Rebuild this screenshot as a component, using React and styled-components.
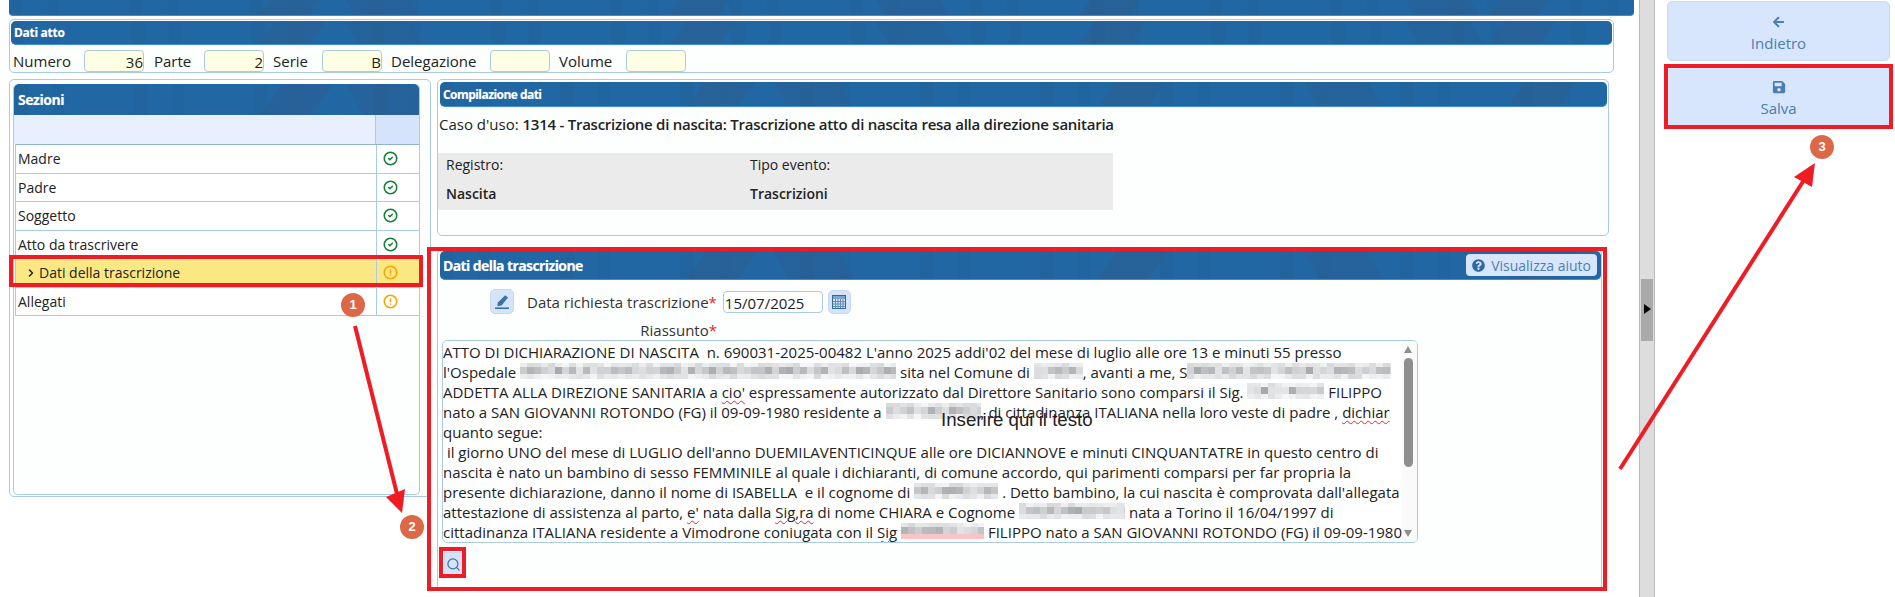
import React from 'react';
import styled, { createGlobalStyle } from 'styled-components';
import { CircleCheck, CircleAlert, ChevronRight, Search } from 'lucide-react';
import { FaArrowLeft, FaSave, FaQuestionCircle } from 'react-icons/fa';

const GlobalStyle = createGlobalStyle`
  html, body {
    margin: 0;
    padding: 0;
    background: #fff;
    overflow: hidden;
  }
  body {
    font-family: 'Open Sans', sans-serif;
    font-size: 14px;
    color: #222;
  }
  * { box-sizing: border-box; }
`;

const BLUE_PATTERN = `
  linear-gradient(125deg, transparent 0 62%, rgba(52, 88, 130, 0.32) 62% 74%, transparent 74%) 0 0 / 410px 100%,
  linear-gradient(60deg, transparent 0 40%, rgba(52, 88, 130, 0.26) 40% 52%, transparent 52%) 130px 0 / 530px 100%,
  repeating-linear-gradient(90deg, rgba(44, 84, 125, 0.16) 0 14px, transparent 14px 38px, rgba(44, 84, 125, 0.1) 38px 50px, transparent 50px 120px),
  #2067a4
`;

const Page = styled.div`
  position: relative;
  display: flex;
  width: 1895px;
  height: 597px;
  overflow: hidden;
`;

const Main = styled.main`
  width: 1639px;
  flex: none;
  padding-left: 9px;
`;

const TopBar = styled.div`
  width: 1625px;
  height: 16px;
  margin-bottom: 3px;
  border-bottom: 1px solid #3d8ed0;
  border-radius: 0 0 4px 4px;
  background: ${BLUE_PATTERN};
`;

const Panel = styled.section`
  width: ${(p) => p.$w}px;
  height: ${(p) => p.$h}px;
  flex: none;
  padding: ${(p) => p.$pad || '2px'};
  background: #fdfefe;
  border: 1px solid #a9cbe3;
  border-radius: 5px;
`;

const Header = styled.header`
  display: flex;
  align-items: center;
  justify-content: space-between;
  height: ${(p) => p.$h}px;
  padding: 0 3px 0 3px;
  border-bottom: 1px solid #3d8ed0;
  border-radius: 5px;
  color: #fff;
  font-weight: 700;
  font-size: ${(p) => p.$size || 12}px;
  letter-spacing: ${(p) => p.$track || -0.3}px;
  text-shadow: 0 0 1px rgba(255, 255, 255, 0.35);
  background: ${BLUE_PATTERN};
`;

const AttoRow = styled.div`
  display: flex;
  align-items: center;
  height: 23px;
  margin-top: 4px;
  padding-left: 2px;
  font-size: 15px;
`;

const AttoLabel = styled.label`
  width: ${(p) => p.$w}px;
`;

const AttoInput = styled.div`
  width: 60px;
  height: 22px;
  margin-right: ${(p) => p.$gap}px;
  padding-right: 0;
  text-align: right;
  line-height: 22px;
  background: #ffffe3;
  border: 1px solid #a9cbe3;
  border-radius: 4px;
`;

const Columns = styled.div`
  display: flex;
  gap: 6px;
  margin-top: 6px;
`;

const SectionsInner = styled.div`
  height: 411px;
  background: #fdfefe;
  border: 1px solid #a9cbe3;
  border-top: 0;
  border-radius: 5px;
`;

const SectionsHead = styled(Header)`
  padding-left: 4px;
  border-radius: 5px 5px 0 0;
  border-bottom: 0;
  margin-top: 1px;
`;

const SubHead = styled.div`
  display: flex;
  height: 29px;
  background: #e8efff;
  & > div {
    margin-left: auto;
    width: 44px;
    background: #d5e4fb;
    border-left: 1px solid #a9cbe3;
  }
`;

const SectionList = styled.ul`
  margin: 0 0 0 1px;
  padding: 0;
  list-style: none;
  border-top: 1px solid #8fb4d2;
  border-left: 1px solid #a9cbe3;
`;

const SectionRow = styled.li`
  display: flex;
  align-items: center;
  height: 28.5px;
  background: ${(p) => (p.$active ? '#fbe883' : '#fff')};
  border-bottom: 1px solid #a9cbe3;
`;

const SectionName = styled.div`
  flex: 1;
  display: flex;
  align-items: center;
  gap: 2px;
  padding-left: ${(p) => (p.$active ? 9 : 2)}px;
`;

const SectionStatus = styled.div`
  display: flex;
  align-items: center;
  width: 43px;
  height: 100%;
  padding-left: 6px;
  border-left: 1px solid #a9cbe3;
  color: ${(p) => (p.$ok ? '#15803a' : '#f7a600')};
`;

const RightColumn = styled.div`
  display: flex;
  flex-direction: column;
  gap: 13px;
`;

const CompilazioneHead = styled(Header)`
  margin-left: 2px;
`;

const UseCase = styled.p`
  margin: 7px 0 0 1px;
  line-height: 20px;
  font-size: 15px;
  strong {
    font-weight: 600;
    letter-spacing: -0.25px;
  }
`;

const GreyBox = styled.div`
  display: grid;
  grid-template-columns: 304px 1fr;
  grid-auto-rows: 28.5px;
  align-items: start;
  width: 675px;
  margin-top: 19px;
  padding-left: 8px;
  line-height: 24px;
  background: #ebebeb;
  strong { font-weight: 600; }
`;

const TrascrizioneHead = styled(Header)`
  padding-right: 4px;
`;

const HelpButton = styled.button`
  display: flex;
  align-items: center;
  gap: 6px;
  height: 22px;
  padding: 0 6px;
  color: #4c7fb0;
  font: 400 14px 'Open Sans', sans-serif;
  letter-spacing: 0;
  background: #d8e6fd;
  border: 0;
  border-radius: 4px;
`;

const DateRow = styled.div`
  display: flex;
  align-items: center;
  height: 25px;
  margin-top: 9px;
  padding-left: 50px;
  font-size: 15px;
`;

const IconButton = styled.button`
  display: flex;
  align-items: center;
  justify-content: center;
  width: ${(p) => p.$w}px;
  height: ${(p) => p.$h}px;
  padding: 0;
  color: #3b72a8;
  background: #d5e4fb;
  border: 1px solid #c4d8f0;
  border-radius: ${(p) => (p.$flat ? 0 : 5)}px;
`;

const DateLabel = styled.label`
  margin-left: 13px;
  white-space: nowrap;
  color: #333;
`;

const Star = styled.span`
  color: #e0262a;
`;

const DateInput = styled.div`
  width: 100px;
  height: 22px;
  margin: 0 5px 0 6px;
  padding-left: 1px;
  line-height: 22px;
  background: #fff;
  border: 1px solid #a9cbe3;
  border-radius: 4px;
`;

const AreaLabel = styled.div`
  width: 277px;
  margin-top: 6px;
  height: 20px;
  line-height: 20px;
  text-align: right;
  font-size: 15px;
  color: #333;
`;

const TextArea = styled.div`
  position: relative;
  display: flex;
  justify-content: space-between;
  width: 976px;
  height: 203px;
  margin: 0 0 0 2px;
  background: #fff;
  border: 1px solid #a9cbe3;
  border-radius: 5px;
  overflow: hidden;
`;

const TextBody = styled.div`
  padding-top: 1px;
  font-size: 15px;
`;

const TextLine = styled.div`
  height: 20px;
  line-height: 20px;
  white-space: pre;
`;

const Misspelt = styled.span`
  text-decoration: underline wavy #e8262a 1px;
  text-underline-offset: 2px;
`;

const Mosaic = styled.svg`
  display: inline-block;
  vertical-align: top;
  margin-top: 1px;
`;

const ScrollBar = styled.div`
  display: flex;
  flex-direction: column;
  align-items: center;
  flex: none;
  width: 15px;
  padding: 5px 3px 5px 0;
  background: #fafafa;
`;

const ArrowUp = styled.div`
  width: 0;
  height: 0;
  border: 4.5px solid transparent;
  border-top: 0;
  border-bottom: 7px solid #8f8f8f;
`;

const ArrowDown = styled(ArrowUp)`
  margin-top: auto;
  border-bottom: 0;
  border-top: 7px solid #8f8f8f;
`;

const ScrollThumb = styled.div`
  width: 9px;
  height: 109px;
  margin-top: 5px;
  background: #8f8f8f;
  border-radius: 5px;
`;

const Placeholder = styled.span`
  position: absolute;
  left: 498px;
  top: 69px;
  font: 400 18.7px 'Liberation Sans', sans-serif;
  line-height: 20px;
  color: #222;
  pointer-events: none;
`;

const SearchRow = styled.div`
  margin: 9px 0 0 4px;
`;

const Splitter = styled.div`
  position: relative;
  width: 16px;
  flex: none;
  background: #dddddd;
  border-left: 1px solid #bbb;
  border-right: 1px solid #bbb;
  &::before {
    content: '';
    position: absolute;
    left: 1px;
    right: 1px;
    top: 279px;
    height: 62px;
    background: #aaaaaa;
  }
  &::after {
    content: '';
    position: absolute;
    left: 4px;
    top: 304px;
    border: 5px solid transparent;
    border-left: 7px solid #000;
    border-right: 0;
  }
`;

const Side = styled.aside`
  display: flex;
  flex-direction: column;
  gap: 5px;
  width: 223px;
  margin: 1px 0 0 12px;
`;

const SideButton = styled.button`
  display: flex;
  flex-direction: column;
  align-items: center;
  gap: 4px;
  height: 60px;
  padding-top: 13px;
  color: #4a7db0;
  font: 400 15px 'Open Sans', sans-serif;
  line-height: 20px;
  background: #d8e6fd;
  border: 1px solid #c9dbf0;
  border-radius: 5px;
  svg {
    height: 14px;
    flex: none;
  }
`;

const Annotations = styled.svg`
  position: absolute;
  inset: 0;
  pointer-events: none;
`;

const Badge = styled.div`
  position: absolute;
  left: ${(p) => p.$x - 12}px;
  top: ${(p) => p.$y - 12}px;
  width: 24px;
  height: 24px;
  color: #fff;
  font: 700 13px/24px 'Liberation Sans', sans-serif;
  text-align: center;
  background: #dc6848;
  border-radius: 50%;
`;

// finto testo oscurato: blocchi grigi da 7px, generati da un seed
const Blur = ({ w, seed = 1, pink }) => {
  const cols = Math.ceil(w / 7);
  const cells = [];
  let s = seed * 9301;
  for (let r = 0; r < 3; r++) {
    for (let c = 0; c < cols; c++) {
      s = (s * 9301 + 49297) % 233280;
      const v = s / 233280;
      const base = r === 1 ? 168 + v * 60 : 215 + v * 30;
      const g = Math.round(base);
      cells.push(
        <rect
          key={`${r}-${c}`}
          x={c * 7}
          y={r === 0 ? 0 : r === 1 ? 4 : 11}
          width="7"
          height={r === 1 ? 7 : r === 0 ? 4 : 5}
          fill={pink && r === 2 ? '#fbc4c8' : `rgb(${g},${g + 1},${g + 3})`}
        />
      );
    }
  }
  return (
    <Mosaic width={w} height="16" viewBox={`0 0 ${w} 16`}>
      {cells}
    </Mosaic>
  );
};

const sections = [
  { name: 'Madre', ok: true },
  { name: 'Padre', ok: true },
  { name: 'Soggetto', ok: true },
  { name: 'Atto da trascrivere', ok: true },
  { name: 'Dati della trascrizione', ok: false, active: true },
  { name: 'Allegati', ok: false },
];

const EditIcon = () => (
  <svg width="16" height="16" viewBox="0 0 16 16" fill="currentColor">
    <path d="M11.2 1.2 14 3.6 7.6 11.4 3.4 12.2 3.8 8.4Z" />
    <rect x="1" y="13.4" width="14" height="1.6" />
  </svg>
);

const CalendarIcon = () => (
  <svg width="14" height="14" viewBox="0 0 14 14">
    <rect x="0.5" y="0.5" width="13" height="13" fill="#dbe7f5" stroke="#2f6aa3" />
    <rect x="1" y="1" width="12" height="3" fill="#7ea6cc" />
    <path
      d="M1 6.5h12M1 9h12M1 11.5h12M3.5 4v9M6 4v9M8.5 4v9M11 4v9"
      stroke="#5c8dbd"
      strokeWidth="1"
    />
  </svg>
);

const App = () => (
  <Page>
    <GlobalStyle />
    <Main>
      <TopBar />
      <Panel $w={1605} $h={54} $pad="1px">
        <Header $h={24}>Dati atto</Header>
        <AttoRow>
          <AttoLabel $w={71}>Numero</AttoLabel>
          <AttoInput $gap={10}>36</AttoInput>
          <AttoLabel $w={50}>Parte</AttoLabel>
          <AttoInput $gap={9}>2</AttoInput>
          <AttoLabel $w={49}>Serie</AttoLabel>
          <AttoInput $gap={9}>B</AttoInput>
          <AttoLabel $w={99}>Delegazione</AttoLabel>
          <AttoInput $gap={9} />
          <AttoLabel $w={67}>Volume</AttoLabel>
          <AttoInput $gap={0} />
        </AttoRow>
      </Panel>
      <Columns>
        <Panel $w={422} $h={418} $pad="3px 10px 3px 3px">
          <SectionsInner>
            <SectionsHead $h={31} $size={14} $track={-0.45}>Sezioni</SectionsHead>
            <SubHead><div /></SubHead>
            <SectionList>
              {sections.map((s) => (
                <SectionRow key={s.name} $active={s.active}>
                  <SectionName $active={s.active}>
                    {s.active && <ChevronRight size={12} strokeWidth={3} />}
                    {s.name}
                  </SectionName>
                  <SectionStatus $ok={s.ok}>
                    {s.ok ? <CircleCheck size={15} strokeWidth={2.5} /> : <CircleAlert size={15} strokeWidth={2.5} />}
                  </SectionStatus>
                </SectionRow>
              ))}
            </SectionList>
          </SectionsInner>
        </Panel>
        <RightColumn>
          <Panel $w={1172} $h={157} $pad="2px 1px 1px 0">
            <CompilazioneHead $h={25} $track={-0.55}>Compilazione dati</CompilazioneHead>
            <UseCase>
              Caso d'uso: <strong>1314 - Trascrizione di nascita: Trascrizione atto di nascita resa alla direzione sanitaria</strong>
            </UseCase>
            <GreyBox>
              <span>Registro:</span>
              <span>Tipo evento:</span>
              <strong>Nascita</strong>
              <strong>Trascrizioni</strong>
            </GreyBox>
          </Panel>
          <Panel $w={1165} $h={342} $pad="1px 0 0 2px">
            <TrascrizioneHead $h={29} $size={14} $track={-0.6}>
              Dati della trascrizione
              <HelpButton>
                <FaQuestionCircle size={13} color="#2f6aa3" />
                Visualizza aiuto
              </HelpButton>
            </TrascrizioneHead>
            <DateRow>
              <IconButton $w={24} $h={25}><EditIcon /></IconButton>
              <DateLabel>Data richiesta trascrizione<Star>*</Star></DateLabel>
              <DateInput>15/07/2025</DateInput>
              <IconButton $w={23} $h={24}><CalendarIcon /></IconButton>
            </DateRow>
            <AreaLabel>Riassunto<Star>*</Star></AreaLabel>
            <TextArea>
              <TextBody>
                <TextLine>ATTO DI DICHIARAZIONE DI NASCITA  n. 690031-2025-00482 L'anno 2025 addi'02 del mese di luglio alle ore 13 e minuti 55 presso</TextLine>
                <TextLine>l'Ospedale <Blur w={376} seed={3} /> sita nel Comune di <Blur w={49} seed={5} />, avanti a me, S<Blur w={204} seed={7} /></TextLine>
                <TextLine>ADDETTA ALLA DIREZIONE SANITARIA a <Misspelt>cio'</Misspelt> espressamente autorizzato dal Direttore Sanitario sono comparsi il Sig. <Blur w={77} seed={11} /> FILIPPO</TextLine>
                <TextLine>nato a SAN GIOVANNI ROTONDO (FG) il 09-09-1980 residente a <Blur w={95} seed={13} />, di cittadinanza ITALIANA nella loro veste di padre , <Misspelt>dichiar</Misspelt></TextLine>
                <TextLine>quanto segue:</TextLine>
                <TextLine> il giorno UNO del mese di LUGLIO dell'anno DUEMILAVENTICINQUE alle ore DICIANNOVE e minuti CINQUANTATRE in questo centro di</TextLine>
                <TextLine>nascita è nato un bambino di sesso FEMMINILE al quale i dichiaranti, di comune accordo, qui parimenti comparsi per far propria la</TextLine>
                <TextLine>presente dichiarazione, danno il nome di ISABELLA  e il cognome di <Blur w={84} seed={17} /> . Detto bambino, la cui nascita è comprovata dall'allegata</TextLine>
                <TextLine>attestazione di assistenza al parto, <Misspelt>e'</Misspelt> nata dalla <Misspelt>Sig,ra</Misspelt> di nome CHIARA e Cognome <Blur w={106} seed={19} /> nata a Torino il 16/04/1997 di</TextLine>
                <TextLine>cittadinanza ITALIANA residente a Vimodrone coniugata con il <Misspelt>Sig</Misspelt> <Blur w={83} seed={23} pink /> FILIPPO nato a SAN GIOVANNI ROTONDO (FG) il 09-09-1980</TextLine>
              </TextBody>
              <ScrollBar>
                <ArrowUp />
                <ScrollThumb />
                <ArrowDown />
              </ScrollBar>
              <Placeholder>Inserire qui il testo</Placeholder>
            </TextArea>
            <SearchRow>
              <IconButton $w={19} $h={24} $flat><Search size={15} strokeWidth={2} /></IconButton>
            </SearchRow>
          </Panel>
        </RightColumn>
      </Columns>
    </Main>
    <Splitter />
    <Side>
      <SideButton><FaArrowLeft size={11} />Indietro</SideButton>
      <SideButton><FaSave size={14} />Salva</SideButton>
    </Side>
    <Annotations width="1895" height="597" viewBox="0 0 1895 597">
      <g fill="none" stroke="#ee1c25" strokeWidth="4">
        <rect x="11" y="257" width="410" height="28" />
        <rect x="429" y="249" width="1176" height="340" />
        <rect x="441" y="549" width="23" height="27" />
        <rect x="1666" y="66" width="225" height="61" />
        <path d="M355 326 397 494" />
        <path d="M1620 469 1804 180" />
      </g>
      <g fill="#ee1c25">
        <path d="M402 513 386 497 405 489Z" />
        <path d="M1815 163 1794 177 1812 187Z" />
      </g>
    </Annotations>
    <Badge $x={353} $y={305}>1</Badge>
    <Badge $x={412} $y={527}>2</Badge>
    <Badge $x={1822} $y={147}>3</Badge>
  </Page>
);

export default App;
